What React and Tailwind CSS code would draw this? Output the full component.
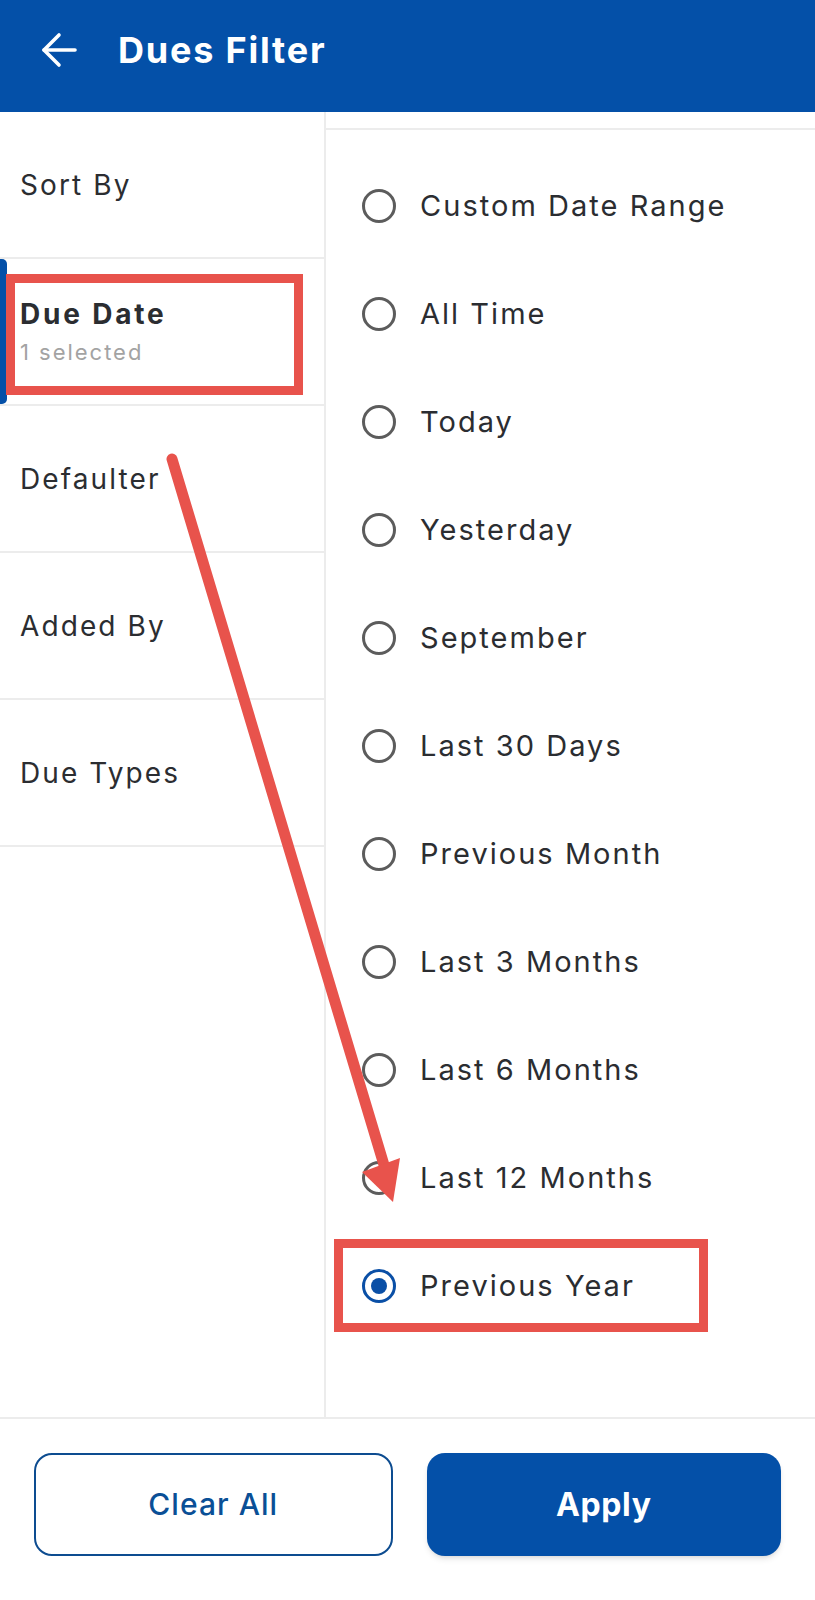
const sideItems = [
    { label: 'Sort By' },
    { label: 'Due Date', sub: '1 selected', active: true },
    { label: 'Defaulter' },
    { label: 'Added By' },
    { label: 'Due Types' }
];

const options = [
    'Custom Date Range',
    'All Time',
    'Today',
    'Yesterday',
    'September',
    'Last 30 Days',
    'Previous Month',
    'Last 3 Months',
    'Last 6 Months',
    'Last 12 Months',
    'Previous Year'
];

function Radio({ checked }) {
    if (checked) {
        return (
            <span className="w-[34px] h-[34px] rounded-full border-[3.5px] border-[#0a4fa6] flex items-center justify-center shrink-0">
                <span className="w-[16px] h-[16px] rounded-full bg-[#0a4fa6]" />
            </span>
        );
    }
    return <span className="w-[34px] h-[34px] rounded-full border-[3px] border-[#5c5c5c] shrink-0" />;
}

export default function App() {
    const selected = 'Previous Year';

    return (
        <div
            className="relative min-h-[1600px] bg-white flex flex-col text-[#2b2d31]"
            style={{ fontFamily: 'Inter, "Noto Sans", sans-serif' }}
        >
            {/* Header */}
            <div className="h-[112px] bg-[#0450a8] flex items-center pl-[41px] pb-[12px] shrink-0">
                <svg width="36" height="36" viewBox="0 0 36 36" fill="none" stroke="white" strokeWidth="3.6" strokeLinecap="round" strokeLinejoin="round">
                    <path d="M34 18H3" />
                    <path d="M18 3L3 18L18 33" />
                </svg>
                <h1 className="ml-[41px] text-[36px] font-bold text-white tracking-[0.05em]">Dues Filter</h1>
            </div>

            {/* Body */}
            <div className="flex h-[1307px] border-b-2 border-[#ececec]">
                {/* Side menu */}
                <div className="w-[326px] border-r-2 border-[#ececec] shrink-0">
                    {sideItems.map(item => (
                        <div
                            key={item.label}
                            className="relative h-[147px] border-b-2 border-[#ececec] flex flex-col justify-center pl-[20px]"
                        >
                            {item.active && (
                                <>
                                    <span className="absolute left-0 top-0 bottom-0 w-[7px] bg-[#0450a8] rounded-r-[5px]" />
                                    <span className="absolute left-[6px] top-[15px] w-[297px] h-[121px] border-[9px] border-[#e8534c]" />
                                </>
                            )}
                            <p
                                className={
                                    item.active
                                        ? 'text-[28px] font-bold tracking-[0.1em] leading-[36px]'
                                        : 'text-[28px] tracking-[0.075em] leading-[36px]'
                                }
                            >
                                {item.label}
                            </p>
                            {item.sub && (
                                <p className="text-[22px] text-[#a3a3a3] tracking-[0.09em] leading-[30px] mt-[5px]">{item.sub}</p>
                            )}
                        </div>
                    ))}
                </div>

                {/* Options */}
                <div className="flex-1 pt-[16px]">
                    <div className="border-t-2 border-[#ececec] pt-[22px]">
                        {options.map(opt => (
                            <div key={opt} className="relative h-[108px] flex items-center pl-[36px]">
                                {opt === selected && (
                                    <span className="absolute left-[8px] top-[7px] w-[374px] h-[93px] border-[9px] border-[#e8534c]" />
                                )}
                                <Radio checked={opt === selected} />
                                <span className="ml-[24px] text-[29px] tracking-[0.07em]">{opt}</span>
                            </div>
                        ))}
                    </div>
                </div>
            </div>

            {/* Footer */}
            <div className="flex gap-[34px] px-[34px] pt-[34px]">
                <button className="flex-1 h-[103px] rounded-[18px] border-2 border-[#0d4c90] text-[#0a4f96] text-[30px] font-medium tracking-[0.035em]">
                    Clear All
                </button>
                <button className="flex-1 h-[103px] rounded-[18px] bg-[#0450a8] text-white text-[32px] font-bold tracking-[0.02em] shadow-md">
                    Apply
                </button>
            </div>

            {/* Annotation arrow */}
            <svg className="absolute inset-0 pointer-events-none" width="815" height="1600" viewBox="0 0 815 1600">
                <line x1="172" y1="459" x2="384" y2="1165" stroke="#e8534c" strokeWidth="11" strokeLinecap="round" />
                <polygon points="393,1202 362,1172 400,1158" fill="#e8534c" />
            </svg>
        </div>
    );
}
